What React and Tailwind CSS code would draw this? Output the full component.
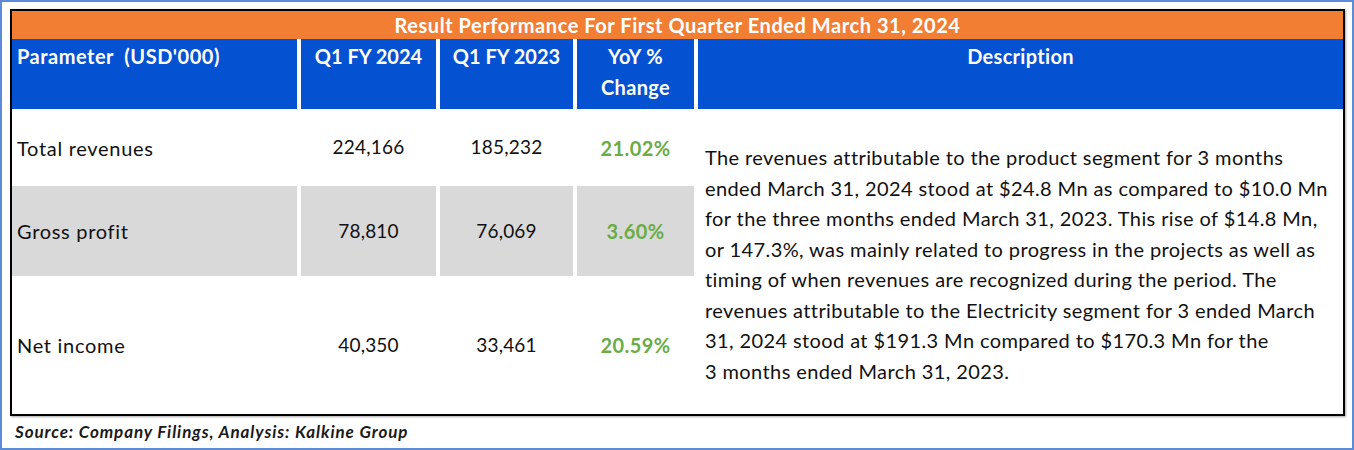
import React from 'react';

const rows = [
  { label: 'Total revenues', q24: '224,166', q23: '185,232', yoy: '21.02%', shaded: false },
  { label: 'Gross profit', q24: '78,810', q23: '76,069', yoy: '3.60%', shaded: true },
  { label: 'Net income', q24: '40,350', q23: '33,461', yoy: '20.59%', shaded: false },
];

const description = [
  'The revenues attributable to the product segment for 3 months',
  'ended March 31, 2024 stood at $24.8 Mn as compared to $10.0 Mn',
  'for the three months ended March 31, 2023. This rise of $14.8 Mn,',
  'or 147.3%, was mainly related to progress in the projects as well as',
  'timing of when revenues are recognized during the period. The',
  'revenues attributable to the Electricity segment for 3 ended March',
  '31, 2024 stood at $191.3 Mn compared to $170.3 Mn for the',
  '3 months ended March 31, 2023.',
];

export default function App() {
  return (
    <div className="w-[1354px] h-[450px] bg-white border-2 border-[#5b8bd9] pl-[8px] pr-[7px] pt-[7px] font-['Lato','Noto_Sans',sans-serif]">
      <div className="h-[407px] border-2 border-black shadow-[1px_1px_2px_rgba(0,0,0,0.35)] flex flex-col">
        {/* title bar */}
        <div className="h-[28px] bg-[#f17e33] text-white font-bold text-[20px] tracking-[0.55px] leading-[28px] text-center">
          Result Performance For First Quarter Ended March 31, 2024
        </div>

        <div className="flex-1 grid grid-cols-[285px_135px_133px_117px_1fr] grid-rows-[70px_77px_90px_1fr] gap-x-[4px]">
          {/* header row */}
          <div className="bg-[#0451d2] text-white font-bold text-[20px] tracking-[0.5px] leading-[31px] pt-[2px] pl-[5px]">
            Parameter&nbsp; (USD'000)
          </div>
          <div className="bg-[#0451d2] text-white font-bold text-[20px] leading-[31px] pt-[2px] text-center">Q1 FY 2024</div>
          <div className="bg-[#0451d2] text-white font-bold text-[20px] leading-[31px] pt-[2px] text-center">Q1 FY 2023</div>
          <div className="bg-[#0451d2] text-white font-bold text-[20px] tracking-[0.3px] leading-[31px] pt-[2px] text-center">
            YoY %<br />Change
          </div>
          <div className="bg-[#0451d2] text-white font-bold text-[20px] tracking-[0.3px] leading-[31px] pt-[2px] text-center">Description</div>

          {rows.map((r, i) => (
            <React.Fragment key={r.label}>
              <div
                className={`${r.shaded ? 'bg-[#d9d9d9]' : ''} flex items-center pl-[5px] text-[20px] tracking-[0.7px] text-[#111]`}
                style={{ gridRow: i + 2, gridColumn: 1 }}
              >
                {r.label}
              </div>
              <div
                className={`${r.shaded ? 'bg-[#d9d9d9]' : ''} flex items-center justify-center text-[19px] tracking-[0.2px] text-[#111]`}
                style={{ gridRow: i + 2, gridColumn: 2 }}
              >
                {r.q24}
              </div>
              <div
                className={`${r.shaded ? 'bg-[#d9d9d9]' : ''} flex items-center justify-center text-[19px] tracking-[0.2px] text-[#111]`}
                style={{ gridRow: i + 2, gridColumn: 3 }}
              >
                {r.q23}
              </div>
              <div
                className={`${r.shaded ? 'bg-[#d9d9d9]' : ''} flex items-center justify-center text-[20px] tracking-[0.4px] font-bold text-[#6aac45]`}
                style={{ gridRow: i + 2, gridColumn: 4 }}
              >
                {r.yoy}
              </div>
            </React.Fragment>
          ))}

          <div className="col-start-5 row-start-2 row-span-3 pl-[7px] pt-[33px] text-[20px] tracking-[0.4px] leading-[30.5px] text-[#111] whitespace-nowrap">
            {description.map((line) => (
              <div key={line}>{line}</div>
            ))}
          </div>
        </div>
      </div>

      <div className="pl-[5px] pt-[6px] text-[17px] tracking-[0.9px] font-bold italic text-[#1a1a1a] leading-[20px]">
        Source: Company Filings, Analysis: Kalkine Group
      </div>
    </div>
  );
}
